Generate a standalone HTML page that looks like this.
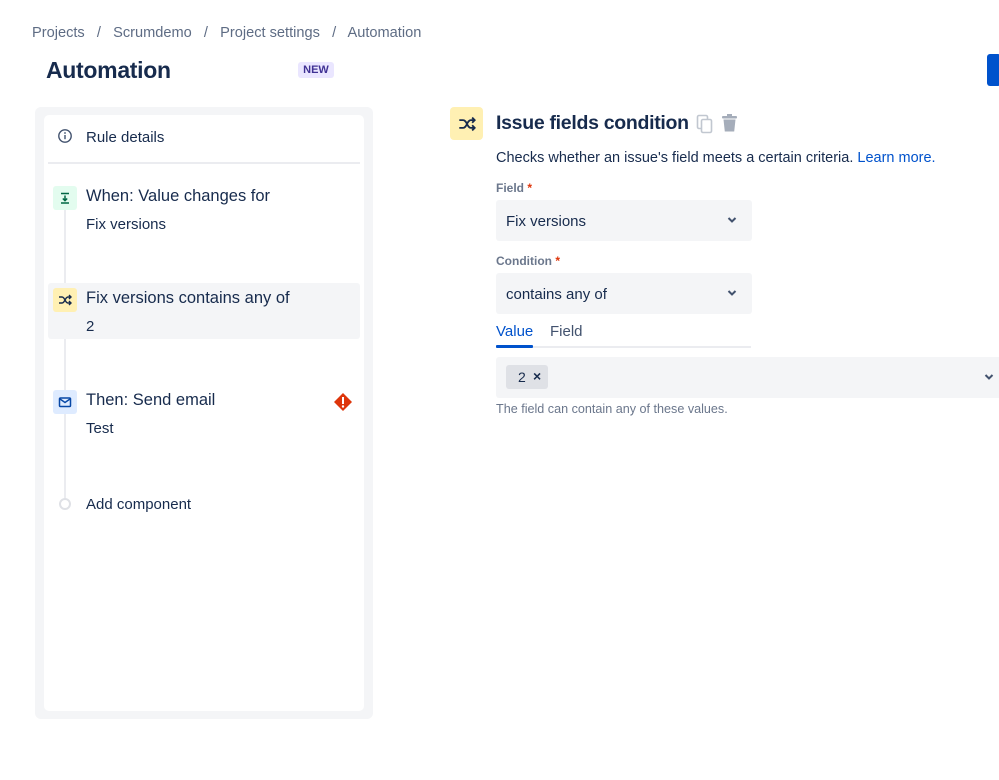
<!DOCTYPE html>
<html><head><meta charset="utf-8"><style>
*{box-sizing:border-box;margin:0;padding:0}
body{width:999px;height:780px;background:#fff;font-family:"Liberation Sans",sans-serif;color:#172b4d;position:relative;overflow:hidden}
.a{position:absolute}
.bc{left:32px;top:25px;font-size:14.6px;color:#5e6c84;white-space:pre}
.h1{left:46px;top:57px;font-size:23px;font-weight:bold;color:#172b4d;letter-spacing:-0.3px}
.new{left:298px;top:62px;width:36px;height:16px;background:#eae6ff;color:#403294;font-size:11px;font-weight:bold;text-align:center;line-height:16px;border-radius:3px}
.bluebtn{left:987px;top:54px;width:14px;height:32px;background:#0052cc;border-radius:3px}
.panel{left:35px;top:107px;width:338px;height:612px;background:#f4f5f7;border-radius:6px}
.inner{left:44px;top:115px;width:320px;height:596px;background:#fff;border-radius:5px}
.t{font-size:15px;color:#172b4d}
.ic{width:24px;height:24px;border-radius:3px;display:flex;align-items:center;justify-content:center}
.sel{background:#f4f5f7;border-radius:3px}
.lbl{font-size:12px;font-weight:bold;color:#6b778c}
</style></head><body>
<div class="a bc">Projects   /   Scrumdemo   /   Project settings   /   Automation</div>
<div class="a h1">Automation</div>
<div class="a new">NEW</div>
<div class="a bluebtn"></div>

<div class="a panel"></div>
<div class="a inner"></div>
<svg class="a" style="left:57px;top:128px" width="16" height="16" viewBox="0 0 16 16"><circle cx="8" cy="8" r="6.2" fill="none" stroke="#42526e" stroke-width="1.4"/><rect x="7.3" y="7" width="1.4" height="4.2" fill="#42526e"/><circle cx="8" cy="5" r="0.9" fill="#42526e"/></svg>
<div class="a t" style="left:86px;top:129px">Rule details</div>
<div class="a" style="left:48px;top:162px;width:312px;height:2px;background:#ebecf0"></div>

<div class="a" style="left:64px;top:200px;width:2px;height:298px;background:#ebecf0"></div>
<div class="a" style="left:48px;top:283px;width:312px;height:56px;background:#f4f5f7;border-radius:3px"></div>

<div class="a ic" style="left:53px;top:186px;background:#e3fcef"><svg width="14" height="14" viewBox="0 0 14 14"><path d="M3 2.5h8M7 4.5v5M4.8 7.5 7 9.7 9.2 7.5M3 12h8" stroke="#006644" stroke-width="1.5" fill="none"/></svg></div>
<div class="a" style="left:86px;top:187px;font-size:16.5px">When: Value changes for</div>
<div class="a t" style="left:86px;top:216px">Fix versions</div>

<div class="a ic" style="left:53px;top:288px;background:#fff0b3"><svg width="14" height="14" viewBox="0 0 14 14"><path d="M1 4h3c3 0 3 6 6 6h3M1 10h3c3 0 3-6 6-6h3M11 2l2 2-2 2M11 8l2 2-2 2" stroke="#172b4d" stroke-width="1.4" fill="none"/></svg></div>
<div class="a" style="left:86px;top:289px;font-size:16.5px">Fix versions contains any of</div>
<div class="a t" style="left:86px;top:318px">2</div>

<div class="a ic" style="left:53px;top:390px;background:#deebff"><svg width="14" height="14" viewBox="0 0 14 14"><rect x="1.5" y="3" width="11" height="8.5" rx="1" fill="none" stroke="#0747a6" stroke-width="1.5"/><path d="M2 4l5 3.5L12 4" stroke="#0747a6" stroke-width="1.4" fill="none"/></svg></div>
<div class="a" style="left:86px;top:391px;font-size:16.5px">Then: Send email</div>
<div class="a t" style="left:86px;top:420px">Test</div>
<svg class="a" style="left:333px;top:392px" width="20" height="20" viewBox="0 0 20 20"><path d="M10 1 19 10 10 19 1 10Z" fill="#de350b"/><rect x="9" y="5" width="2" height="7" fill="#fff"/><circle cx="10" cy="14.5" r="1.2" fill="#fff"/></svg>

<div class="a" style="left:59px;top:498px;width:12px;height:12px;border:2px solid #dfe1e6;border-radius:50%;background:#fff"></div>
<div class="a t" style="left:86px;top:496px">Add component</div>

<div class="a ic" style="left:450px;top:107px;width:33px;height:33px;background:#fff0b3;border-radius:4px"><svg width="20" height="18" viewBox="0 0 14 14"><path d="M1 4h3c3 0 3 6 6 6h3M1 10h3c3 0 3-6 6-6h3M11 2l2 2-2 2M11 8l2 2-2 2" stroke="#172b4d" stroke-width="1.4" fill="none"/></svg></div>
<div class="a" style="left:496px;top:112px;font-size:19.5px;font-weight:bold;letter-spacing:-0.3px">Issue fields condition</div>
<svg class="a" style="left:696px;top:114px" width="18" height="20" viewBox="0 0 18 20"><rect x="1.5" y="1.5" width="10" height="13" rx="1.5" fill="none" stroke="#c1c7d0" stroke-width="1.6"/><rect x="5.5" y="5.5" width="10" height="13" rx="1.5" fill="#fff" stroke="#c1c7d0" stroke-width="1.6"/></svg>
<svg class="a" style="left:721px;top:114px" width="17" height="18" viewBox="0 0 17 18"><rect x="1" y="2" width="15" height="2.5" rx="1" fill="#a5adba"/><rect x="6" y="0" width="5" height="2" fill="#a5adba"/><path d="M2.5 5.5h12l-1.3 12H3.8Z" fill="#a5adba"/></svg>
<div class="a" style="left:496px;top:150px;font-size:14.5px">Checks whether an issue's field meets a certain criteria. <span style="color:#0052cc">Learn more.</span></div>

<div class="a lbl" style="left:496px;top:181px">Field <span style="color:#de350b">*</span></div>
<div class="a sel" style="left:496px;top:200px;width:256px;height:41px"></div>
<div class="a t" style="left:506px;top:213px">Fix versions</div>
<svg class="a" style="left:727px;top:216px" width="10" height="8" viewBox="0 0 10 8"><path d="M1.5 2 5 5.5 8.5 2" stroke="#42526e" stroke-width="2" fill="none"/></svg>

<div class="a lbl" style="left:496px;top:254px">Condition <span style="color:#de350b">*</span></div>
<div class="a sel" style="left:496px;top:273px;width:256px;height:41px"></div>
<div class="a t" style="left:506px;top:286px">contains any of</div>
<svg class="a" style="left:727px;top:289px" width="10" height="8" viewBox="0 0 10 8"><path d="M1.5 2 5 5.5 8.5 2" stroke="#42526e" stroke-width="2" fill="none"/></svg>

<div class="a" style="left:496px;top:323px;font-size:15px;color:#0052cc">Value</div>
<div class="a" style="left:550px;top:323px;font-size:15px;color:#42526e">Field</div>
<div class="a" style="left:496px;top:346px;width:255px;height:2px;background:#ebecf0"></div>
<div class="a" style="left:496px;top:345px;width:37px;height:3px;background:#0052cc;border-radius:1px"></div>

<div class="a sel" style="left:496px;top:357px;width:510px;height:41px"></div>
<div class="a" style="left:506px;top:365px;width:42px;height:24px;background:#dfe1e6;border-radius:3px"></div>
<div class="a" style="left:518px;top:369px;font-size:14px">2</div>
<div class="a" style="left:533px;top:368px;font-size:14px;font-weight:bold">×</div>
<svg class="a" style="left:984px;top:373px" width="10" height="8" viewBox="0 0 10 8"><path d="M1.5 2 5 5.5 8.5 2" stroke="#42526e" stroke-width="2" fill="none"/></svg>
<div class="a" style="left:496px;top:402px;font-size:12.6px;color:#6b778c">The field can contain any of these values.</div>
</body></html>
